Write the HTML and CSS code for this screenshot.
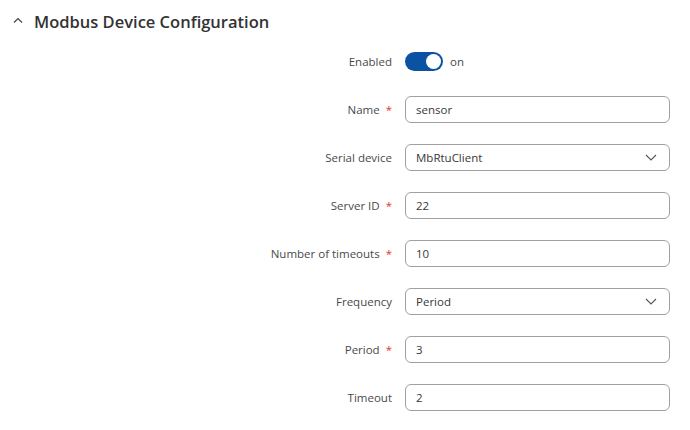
FILE: index.html
```html
<!DOCTYPE html>
<html>
<head>
<meta charset="utf-8">
<link rel="stylesheet" href="styles.css">
</head>
<body>
<div class="section">
  <div class="section-head">
    <svg class="caret" width="10" height="6" viewBox="0 0 10 6"><path d="M1 5.5 L5 1.5 L9 5.5" fill="none" stroke="#444" stroke-width="1.2"/></svg>
    <h2 class="title">Modbus Device Configuration</h2>
  </div>
  <div class="form">
    <div class="row">
      <div class="label">Enabled</div>
      <div class="control toggle-wrap">
        <span class="toggle"><span class="knob"></span></span>
        <span class="toggle-text">on</span>
      </div>
    </div>
    <div class="row">
      <div class="label">Name<span class="req">*</span></div>
      <div class="control"><div class="input">sensor</div></div>
    </div>
    <div class="row">
      <div class="label">Serial device</div>
      <div class="control"><div class="input select">MbRtuClient<svg class="chev" width="12" height="7" viewBox="0 0 12 7"><path d="M1 1 L6 6 L11 1" fill="none" stroke="#555" stroke-width="1.1"/></svg></div></div>
    </div>
    <div class="row">
      <div class="label">Server ID<span class="req">*</span></div>
      <div class="control"><div class="input">22</div></div>
    </div>
    <div class="row">
      <div class="label">Number of timeouts<span class="req">*</span></div>
      <div class="control"><div class="input">10</div></div>
    </div>
    <div class="row">
      <div class="label">Frequency</div>
      <div class="control"><div class="input select">Period<svg class="chev" width="12" height="7" viewBox="0 0 12 7"><path d="M1 1 L6 6 L11 1" fill="none" stroke="#555" stroke-width="1.1"/></svg></div></div>
    </div>
    <div class="row">
      <div class="label">Period<span class="req">*</span></div>
      <div class="control"><div class="input">3</div></div>
    </div>
    <div class="row">
      <div class="label">Timeout</div>
      <div class="control"><div class="input">2</div></div>
    </div>
  </div>
</div>
</body>
</html>
```
FILE: styles.css
```css
html, body {
  margin: 0;
  padding: 0;
  background: #ffffff;
  font-family: "Open Sans", "Noto Sans", sans-serif;
  color: #404040;
}
.section-head {
  display: flex;
  align-items: center;
  height: 42px;
  padding-left: 13px;
  box-sizing: border-box;
}
.caret {
  margin-right: 11px;
  margin-top: -2px;
}
.title {
  margin: 0;
  font-size: 16.5px;
  font-weight: 600;
  color: #333333;
}
.form {
  display: flex;
  flex-direction: column;
  margin-top: -5px;
}
.row {
  display: flex;
  align-items: center;
  height: 48px;
}
.label {
  width: 393px;
  text-align: right;
  font-size: 11.5px;
  color: #4a4a4a;
  box-sizing: border-box;
  padding-right: 1px;
}
.req {
  color: #e2372b;
  margin-left: 6px;
}
.control {
  margin-left: 12px;
  width: 265px;
}
.toggle-wrap {
  display: flex;
  align-items: center;
}
.toggle {
  position: relative;
  display: inline-block;
  width: 38px;
  height: 19px;
  border-radius: 10px;
  background: #0c52a3;
}
.knob {
  position: absolute;
  right: 2px;
  top: 2px;
  width: 15px;
  height: 15px;
  border-radius: 50%;
  background: #ffffff;
}
.toggle-text {
  margin-left: 7px;
  font-size: 11.5px;
  color: #4a4a4a;
}
.input {
  height: 27px;
  border: 1px solid #a0a0a0;
  border-radius: 6px;
  box-sizing: border-box;
  padding: 0 10px;
  display: flex;
  align-items: center;
  justify-content: space-between;
  font-size: 11.5px;
  color: #383838;
}
.chev {
  margin-right: 2px;
}
```
